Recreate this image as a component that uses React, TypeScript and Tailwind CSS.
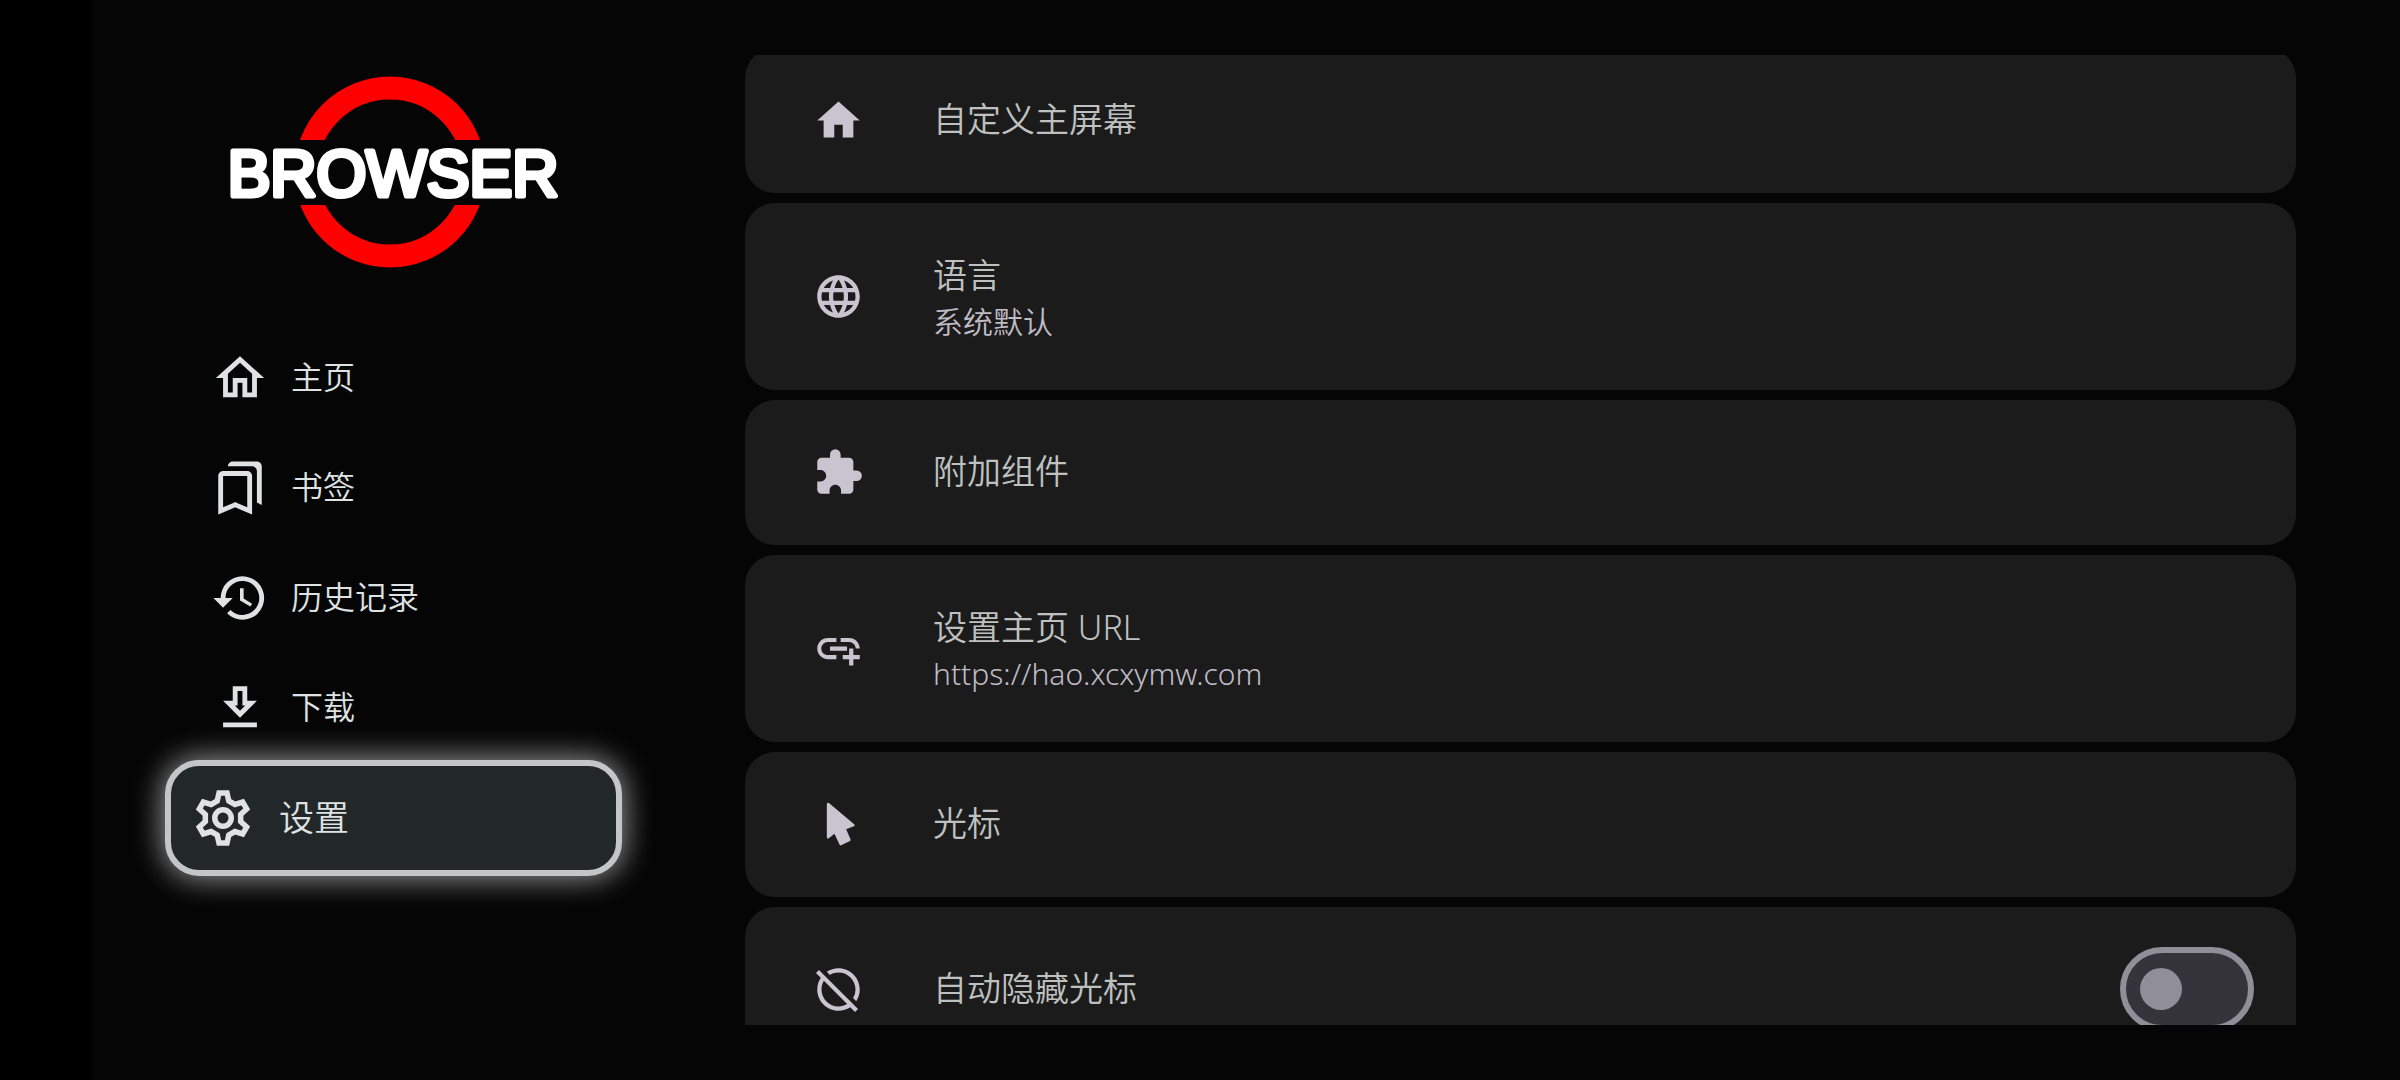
import type { ReactNode } from "react";
import {
  MdAddLink,
  MdExtension,
  MdHideSource,
  MdHistory,
  MdHome,
  MdLanguage,
  MdOutlineBookmarks,
  MdOutlineGetApp,
  MdOutlineHome,
} from "react-icons/md";

const font =
  "font-['Noto_Sans','Noto_Sans_CJK_SC',sans-serif]";

function Logo() {
  return (
    <svg viewBox="0 0 340 192" className="h-[192px] w-[340px]" role="img" aria-label="BROWSER">
      <defs>
        <clipPath id="arcs">
          <rect x="0" y="0" width="340" height="64" />
          <rect x="0" y="129" width="340" height="63" />
        </clipPath>
      </defs>
      <circle cx="166" cy="96" r="84" fill="none" stroke="#ff0000" strokeWidth="23" clipPath="url(#arcs)" />
      <text
        x="169"
        y="120"
        textAnchor="middle"
        fontSize="64"
        fill="#fff"
        stroke="#fff"
        strokeWidth="5"
        strokeLinejoin="round"
        className="font-['Liberation_Sans',sans-serif] font-normal"
      >
        BROWSER
      </text>
    </svg>
  );
}

function GearIcon() {
  return (
    <svg viewBox="-12 -12 24 24" className="size-[66px] shrink-0" fill="none" stroke="currentColor" aria-hidden="true">
      <path
        strokeWidth="2"
        d="M-1.45-9.1L1.45-9.1 2.1-6.2 4.32-4.92 7.16-5.81 8.61-3.29 6.42-1.28 6.42 1.28 8.61 3.29 7.16 5.81 4.32 4.92 2.1 6.2 1.45 9.1-1.45 9.1-2.1 6.2-4.32 4.92-7.16 5.81-8.61 3.29-6.42 1.28-6.42-1.28-8.61-3.29-7.16-5.81-4.32-4.92-2.1-6.2z"
      />
      <circle r="3" strokeWidth="2" />
    </svg>
  );
}

function CursorIcon() {
  return (
    <svg viewBox="0 0 24 24" className="size-[51px]" fill="currentColor" stroke="currentColor" strokeWidth="1.2" strokeLinejoin="round" aria-hidden="true">
      <path d="M7.1 2.4V18l3.2-2.6 2.7 5.8 4.1-2-2.3-5.3 4.2-1.6z" />
    </svg>
  );
}

const navItems = [
  { label: "主页", icon: <MdOutlineHome size={58} /> },
  { label: "书签", icon: <MdOutlineBookmarks size={58} /> },
  { label: "历史记录", icon: <MdHistory size={58} /> },
  { label: "下载", icon: <MdOutlineGetApp size={58} /> },
];

function Row({ icon, title, detail }: { icon: ReactNode; title: string; detail?: string }) {
  return (
    <button
      type="button"
      className={`flex w-full shrink-0 items-center gap-[69px] rounded-[30px] bg-[#1b1b1b] pl-[68px] text-left ${detail ? "h-[187px]" : "h-[145px]"}`}
    >
      <span className="text-[#c9c5d0]">{icon}</span>
      <span className={`flex flex-col ${detail ? "pt-1" : "pb-1"}`}>
        <span className="text-[34px] leading-[46px] text-[#bfc1c0]">{title}</span>
        {detail && <span className="text-[30px] leading-[48px] text-[#c0bcc6]">{detail}</span>}
      </span>
    </button>
  );
}

export default function App() {
  return (
    <div className={`${font} flex h-screen bg-black pl-[92px] font-[350]`}>
      <div className="flex min-w-0 flex-1 bg-[#050505] pr-[104px]">
        <aside className="w-[653px] shrink-0 pt-[76px] pl-[73px]">
          <div className="flex pl-[59px]">
            <Logo />
          </div>
          <nav className="mt-[55px] w-[457px]">
            {navItems.map((item) => (
              <a key={item.label} href="#" className="flex h-[110px] items-center gap-[22px] pl-[46px] text-[32px] text-[#dfe2e2]">
                {item.icon}
                <span className="pb-0.5">{item.label}</span>
              </a>
            ))}
            <a
              href="#"
              aria-current="page"
              className="-mt-[3px] flex h-[116px] items-center gap-[23px] rounded-[34px] border-[6px] border-[#c3c6c6] bg-[#22272a] pl-[19px] text-[35px] text-[#dfe2e2] shadow-[0_0_30px_2px_rgba(255,255,255,0.6)]"
            >
              <GearIcon />
              设置
            </a>
          </nav>
        </aside>
        <main className="mt-[55px] mb-[55px] min-w-0 flex-1 overflow-hidden">
          <div className="-mt-[7px] flex flex-col gap-[10px]">
            <Row icon={<MdHome size={51} />} title="自定义主屏幕" />
            <Row icon={<MdLanguage size={51} />} title="语言" detail="系统默认" />
            <Row icon={<MdExtension size={51} />} title="附加组件" />
            <Row icon={<MdAddLink size={51} />} title="设置主页 URL" detail="https://hao.xcxymw.com" />
            <Row icon={<CursorIcon />} title="光标" />
            <label className="flex h-[164px] shrink-0 items-center rounded-[30px] bg-[#1b1b1b] pr-[42px] pl-[68px]">
              <MdHideSource size={51} className="text-[#c9c5d0]" />
              <span className="ml-[69px] flex-1 pb-0.5 text-[34px] leading-[46px] text-[#bfc1c0]">自动隐藏光标</span>
              <input
                type="checkbox"
                role="switch"
                className="h-[84px] w-[134px] appearance-none rounded-full border-[6px] border-[#8f8e99] bg-[#35343a] pl-[14px] before:mt-[15px] before:block before:size-[42px] before:rounded-full before:bg-[#8f8e99] checked:pl-[65px]"
              />
            </label>
          </div>
        </main>
      </div>
    </div>
  );
}
